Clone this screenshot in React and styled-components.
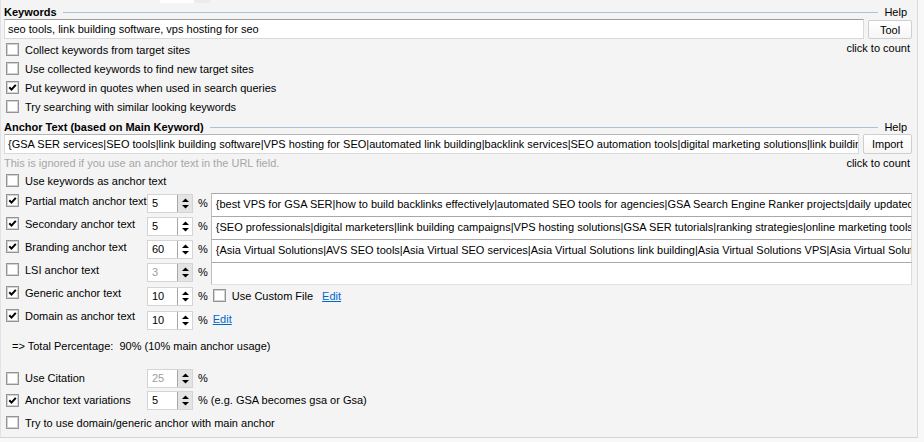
import React from "react";
import styled, { createGlobalStyle } from "styled-components";

const GlobalStyle = createGlobalStyle`
  html, body { margin: 0; padding: 0; background: #f8f8f8; }
  body { font-family: "Liberation Sans", Arial, sans-serif; font-size: 11px; color: #000; }
  * { box-sizing: border-box; }
`;

const Panel = styled.div`
  width: 918px;
  height: 438px;
  background: #f4f4f4;
  border-left: 1px solid #e2e2e2;
  border-right: 1px solid #dadada;
  border-bottom: 1px solid #d4d4d4;
  padding: 0 5px 0 3px;
  display: flex;
  flex-direction: column;
  overflow: hidden;
`;

const TopStrip = styled.div`
  height: 5px;
  display: flex;
  padding-left: 156px;
`;

const StripCell = styled.span`
  height: 3px;
  width: ${(p) => p.$w}px;
  background: ${(p) => p.$bg};
`;

const SectionHeader = styled.div`
  display: flex;
  align-items: center;
  height: 14px;
  margin-top: ${(p) => p.$gap || 0}px;
`;

const Title = styled.span`
  font-weight: bold;
  line-height: 14px;
  white-space: nowrap;
`;

const Rule = styled.span`
  flex: 1;
  height: 1px;
  background: #a9c1d9;
  margin: 0 6px 0 6px;
`;

const Help = styled.span`
  margin-right: 5px;
  line-height: 14px;
`;

const InputRow = styled.div`
  display: flex;
  height: 20px;
  gap: 4px;
`;

const TextInput = styled.div`
  flex: 1;
  height: 20px;
  background: #fff;
  border: 1px solid #d9d9d9;
  border-top-color: ${(p) => (p.$strong ? "#9d9d9d" : "#b4b4b4")};
  padding: 0 3px;
  line-height: 18px;
  white-space: nowrap;
  overflow: hidden;
`;

const Button = styled.div`
  width: ${(p) => p.$w}px;
  height: ${(p) => p.$h || 19}px;
  margin-top: ${(p) => p.$top || 0}px;
  background: linear-gradient(#ffffff, #f6f6f6);
  border: 1px solid #cfcfcf;
  border-radius: 2px;
  display: flex;
  align-items: center;
  justify-content: center;
`;

const OptionsBlock = styled.div`
  display: flex;
  justify-content: space-between;
  margin-top: 1px;
`;

const CheckList = styled.div`
  display: flex;
  flex-direction: column;
`;

const CheckRow = styled.div`
  display: flex;
  align-items: center;
  gap: 6px;
  height: ${(p) => p.$h || 19}px;
  padding-left: 2px;
  white-space: nowrap;
`;

const CountHint = styled.span`
  line-height: 14px;
  margin-top: ${(p) => p.$top || 0}px;
  margin-right: 2px;
`;

const HintRow = styled.div`
  display: flex;
  justify-content: space-between;
  align-items: center;
  height: 18px;
`;

const Muted = styled.span`
  color: #a6a6a6;
`;

const Box = styled.span`
  width: 13px;
  height: 13px;
  flex: none;
  background: #fff;
  border: 1px solid #949494;
  box-shadow: inset 0 0 0 1px #d2d2d2;
  display: inline-flex;
  align-items: center;
  justify-content: center;
`;

const CheckBox = ({ checked }) => (
  <Box>
    {checked && (
      <svg width="9" height="9" viewBox="0 0 9 9">
        <path d="M1.3 4.3 L3.5 6.6 L7.8 1.8" stroke="#000" strokeWidth="2" fill="none" />
      </svg>
    )}
  </Box>
);

const AnchorRows = styled.div`
  display: flex;
  flex-direction: column;
  margin-top: ${(p) => p.$gap || 0}px;
`;

const AnchorRow = styled.div`
  display: flex;
  align-items: ${(p) => (p.$center ? "center" : "flex-start")};
  height: ${(p) => p.$h || 23}px;
`;

const LabelCell = styled.div`
  width: 143px;
  flex: none;
  display: flex;
  align-items: center;
  gap: 6px;
  height: 15px;
  padding-left: 2px;
  white-space: nowrap;
`;

const SpinBox = styled.div`
  width: 46px;
  height: 19px;
  flex: none;
  display: flex;
  background: #fff;
  border: 1px solid #d4d4d4;
  margin-top: ${(p) => p.$top || 0}px;
`;

const SpinValue = styled.span`
  flex: 1;
  padding-left: 4px;
  line-height: 17px;
  color: ${(p) => (p.$disabled ? "#9c9c9c" : "#000")};
`;

const SpinArrows = styled.span`
  width: 15px;
  border-left: 1px solid #a8a8a8;
  background: ${(p) => (p.$shaded ? "#e4e4e4" : "#fff")};
  display: flex;
  align-items: center;
  justify-content: center;
`;

const Spinner = ({ value, disabled, shaded, top }) => (
  <SpinBox $top={top}>
    <SpinValue $disabled={disabled}>{value}</SpinValue>
    <SpinArrows $shaded={shaded}>
      <svg width="7" height="11" viewBox="0 0 7 11">
        <polygon points="0,4 3.5,0.5 7,4" fill="#000" />
        <polygon points="0,7 3.5,10.5 7,7" fill="#000" />
      </svg>
    </SpinArrows>
  </SpinBox>
);

const Percent = styled.span`
  padding: 0 3px 0 5px;
  line-height: 19px;
  margin-top: ${(p) => p.$top || 0}px;
  white-space: nowrap;
`;

const Field = styled.div`
  flex: 1;
  min-width: 0;
  height: 23px;
  background: #fff;
  border-top: 1px solid #a9a9a9;
  border-left: 1px solid #bdbdbd;
  border-right: 1px solid #dcdcdc;
  border-bottom: ${(p) => (p.$last ? "1px solid #e2e2e2" : "none")};
  padding: 0 4px;
  line-height: 21px;
  white-space: nowrap;
  overflow: hidden;
`;

const Extras = styled.div`
  display: flex;
  align-items: center;
  height: 19px;
  margin-top: 1px;
  white-space: nowrap;
`;

const InlineCheck = styled.span`
  display: flex;
  align-items: center;
  gap: 6px;
  margin-left: 2px;
`;

const EditLink = styled.span`
  color: #0066cc;
  text-decoration: underline;
  margin-left: ${(p) => p.$gap}px;
`;

const Total = styled.div`
  height: 30px;
  display: flex;
  align-items: center;
  padding-left: 8px;
  white-space: pre;
`;

const anchorRows = [
  {
    label: "Partial match anchor text",
    value: "5",
    shaded: true,
    text:
      "{best VPS for GSA SER|how to build backlinks effectively|automated SEO tools for agencies|GSA Search Engine Ranker projects|daily updated backlink lists|SEO link building tips}",
  },
  {
    label: "Secondary anchor text",
    value: "5",
    text:
      "{SEO professionals|digital marketers|link building campaigns|VPS hosting solutions|GSA SER tutorials|ranking strategies|online marketing tools|website owners}",
  },
  {
    label: "Branding anchor text",
    value: "60",
    text:
      "{Asia Virtual Solutions|AVS SEO tools|Asia Virtual SEO services|Asia Virtual Solutions link building|Asia Virtual Solutions VPS|Asia Virtual Solutions GSA SER}",
  },
  { label: "LSI anchor text", value: "3", unchecked: true, disabled: true, shaded: true, text: "", last: true },
];

export default function App() {
  return (
    <>
      <GlobalStyle />
      <Panel>
        <TopStrip>
          <StripCell $w={34} $bg="#ffffff" />
          <StripCell $w={16} $bg="#ececec" />
        </TopStrip>

        <SectionHeader>
          <Title>Keywords</Title>
          <Rule />
          <Help>Help</Help>
        </SectionHeader>
        <InputRow>
          <TextInput $strong>seo tools, link building software, vps hosting for seo</TextInput>
          <Button $w={44} $top={1}>Tool</Button>
        </InputRow>
        <OptionsBlock>
          <CheckList>
            <CheckRow><CheckBox />Collect keywords from target sites</CheckRow>
            <CheckRow><CheckBox />Use collected keywords to find new target sites</CheckRow>
            <CheckRow><CheckBox checked />Put keyword in quotes when used in search queries</CheckRow>
            <CheckRow><CheckBox />Try searching with similar looking keywords</CheckRow>
          </CheckList>
          <CountHint $top={1}>click to count</CountHint>
        </OptionsBlock>

        <SectionHeader $gap={4}>
          <Title>Anchor Text (based on Main Keyword)</Title>
          <Rule />
          <Help>Help</Help>
        </SectionHeader>
        <InputRow>
          <TextInput>
            {"{GSA SER services|SEO tools|link building software|VPS hosting for SEO|automated link building|backlink services|SEO automation tools|digital marketing solutions|link building strategies}"}
          </TextInput>
          <Button $w={49} $h={20}>Import</Button>
        </InputRow>
        <HintRow>
          <Muted>This is ignored if you use an anchor text in the URL field.</Muted>
          <CountHint>click to count</CountHint>
        </HintRow>
        <CheckRow $h={17}><CheckBox />Use keywords as anchor text</CheckRow>

        <AnchorRows $gap={4}>
          {anchorRows.map((r) => (
            <AnchorRow key={r.label}>
              <LabelCell>
                <CheckBox checked={!r.unchecked} />
                {r.label}
              </LabelCell>
              <Spinner value={r.value} disabled={r.disabled} shaded={r.shaded} top={1} />
              <Percent $top={1}>%</Percent>
              <Field $last={r.last}>{r.text}</Field>
            </AnchorRow>
          ))}
          <AnchorRow>
            <LabelCell>
              <CheckBox checked />
              Generic anchor text
            </LabelCell>
            <Spinner value="10" top={2} />
            <Percent $top={2}>%</Percent>
            <Extras>
              <InlineCheck>
                <CheckBox />
                Use Custom File
              </InlineCheck>
              <EditLink $gap={9}>Edit</EditLink>
            </Extras>
          </AnchorRow>
          <AnchorRow>
            <LabelCell>
              <CheckBox checked />
              Domain as anchor text
            </LabelCell>
            <Spinner value="10" top={3} />
            <Percent $top={3}>%</Percent>
            <Extras>
              <EditLink $gap={2}>Edit</EditLink>
            </Extras>
          </AnchorRow>
        </AnchorRows>

        <Total>{"=> Total Percentage:  90% (10% main anchor usage)"}</Total>

        <AnchorRows $gap={6}>
          <AnchorRow $center $h={22}>
            <LabelCell>
              <CheckBox />
              Use Citation
            </LabelCell>
            <Spinner value="25" disabled shaded />
            <Percent>%</Percent>
          </AnchorRow>
          <AnchorRow $center $h={22}>
            <LabelCell>
              <CheckBox checked />
              Anchor text variations
            </LabelCell>
            <Spinner value="5" shaded />
            <Percent>% (e.g. GSA becomes gsa or Gsa)</Percent>
          </AnchorRow>
          <AnchorRow $center $h={23}>
            <LabelCell>
              <CheckBox />
              Try to use domain/generic anchor with main anchor
            </LabelCell>
          </AnchorRow>
        </AnchorRows>
      </Panel>
    </>
  );
}
